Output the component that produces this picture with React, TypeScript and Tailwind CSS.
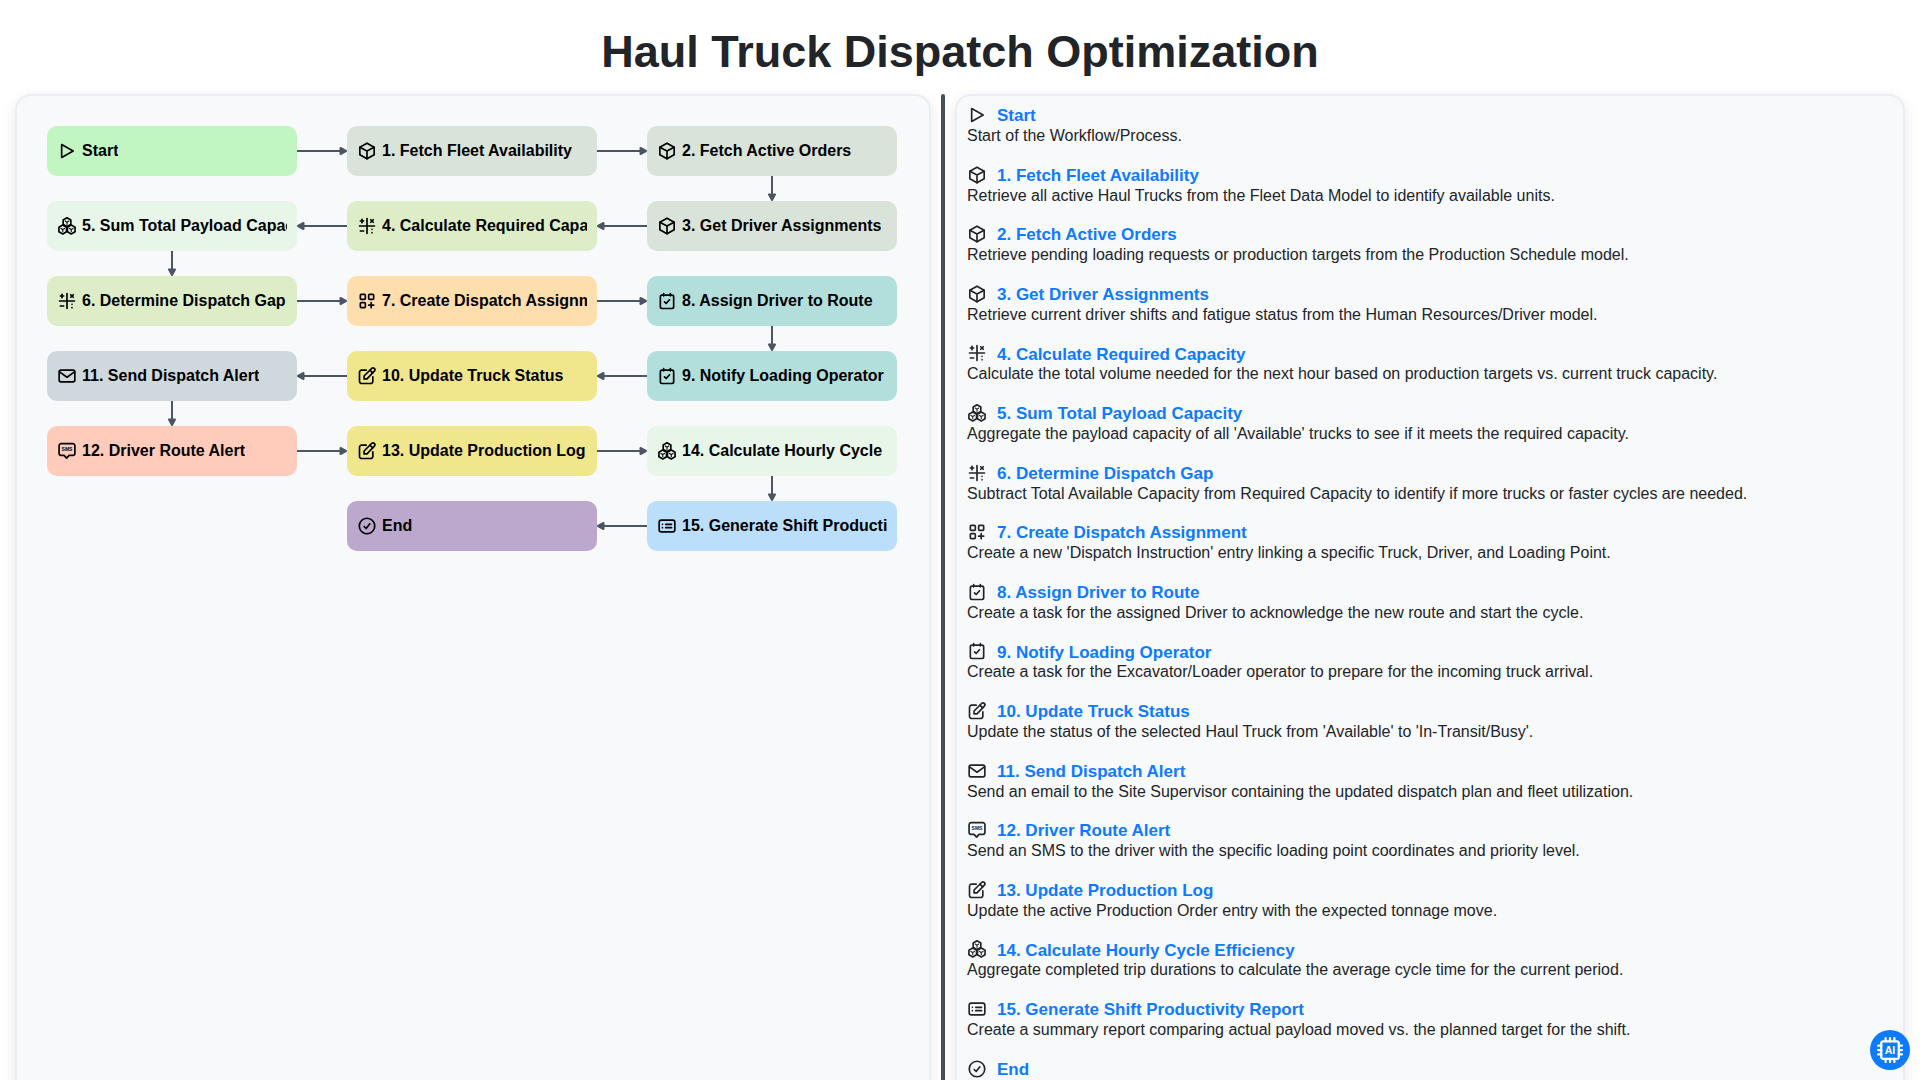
import React from "react";
import { TbMathSymbols, TbLayoutGridAdd } from "react-icons/tb";

type IconProps = { size?: number; className?: string };

const strokeProps = {
  fill: "none",
  stroke: "currentColor",
  strokeWidth: 2,
  strokeLinecap: "round" as const,
  strokeLinejoin: "round" as const,
};

function PlayIcon({ size = 20, className }: IconProps) {
  return (
    <svg width={size} height={size} viewBox="0 0 24 24" {...strokeProps} className={className}>
      <path d="M5.6 4.2v15.6L19.4 12z" />
    </svg>
  );
}

function BoxIcon({ size = 20, className }: IconProps) {
  return (
    <svg width={size} height={size} viewBox="0 0 24 24" {...strokeProps} className={className}>
      <path d="M12 2.6l8.6 4.9v9L12 21.4l-8.6-4.9v-9z" />
      <path d="M12 12l8.6-4.5M12 12v9.4M12 12L3.4 7.5" />
    </svg>
  );
}

function hexPoints(cx: number, cy: number, r: number) {
  const w = 0.866 * r;
  return `${cx},${cy - r} ${cx + w},${cy - r / 2} ${cx + w},${cy + r / 2} ${cx},${cy + r} ${cx - w},${cy + r / 2} ${cx - w},${cy - r / 2}`;
}

function HexIcon({ size = 20, className }: IconProps) {
  const centers = [
    [12, 7.4],
    [6.9, 16.2],
    [17.1, 16.2],
  ];
  return (
    <svg width={size} height={size} viewBox="0 0 24 24" {...strokeProps} strokeWidth={2} className={className}>
      {centers.map(([x, y]) => (
        <React.Fragment key={`${x}-${y}`}>
          <polygon points={hexPoints(x, y, 5.3)} />
          <path d={`M${x} ${y}v2.6M${x} ${y}l-2.2-1.3M${x} ${y}l2.2-1.3`} strokeWidth={1.3} />
        </React.Fragment>
      ))}
    </svg>
  );
}

function EditIcon({ size = 20, className }: IconProps) {
  return (
    <svg width={size} height={size} viewBox="0 0 24 24" {...strokeProps} className={className}>
      <path d="M11 5H5.5A2.5 2.5 0 0 0 3 7.5v11A2.5 2.5 0 0 0 5.5 21h11a2.5 2.5 0 0 0 2.5-2.5V13" />
      <path d="M8.5 15.5V12l9-9a2.2 2.2 0 0 1 3.3 3.2L12 15.5z" />
      <path d="M15.5 5l3.3 3.3" />
    </svg>
  );
}

function MailIcon({ size = 20, className }: IconProps) {
  return (
    <svg width={size} height={size} viewBox="0 0 24 24" {...strokeProps} className={className}>
      <rect x="2.6" y="5" width="18.8" height="14" rx="2.2" />
      <path d="M3 7l9 6.5L21 7" />
    </svg>
  );
}

function TaskIcon({ size = 20, className }: IconProps) {
  return (
    <svg width={size} height={size} viewBox="0 0 24 24" {...strokeProps} className={className}>
      <rect x="4" y="5" width="16" height="16" rx="2" />
      <path d="M8 3v3M16 3v3M9 13l2 2 4-4.5" />
    </svg>
  );
}

function SmsIcon({ size = 20, className }: IconProps) {
  return (
    <svg width={size} height={size} viewBox="0 0 24 24" fill="none" className={className}>
      <path d="M5 3.2h14a2.5 2.5 0 0 1 2.5 2.5v9a2.5 2.5 0 0 1-2.5 2.5h-4.5l-3 3.4-3-3.4H5A2.5 2.5 0 0 1 2.5 14.7v-9A2.5 2.5 0 0 1 5 3.2z" stroke="currentColor" strokeWidth="2" strokeLinejoin="round" />
      <text x="12" y="12.5" textAnchor="middle" fontSize="6" fontWeight="700" fontFamily="Liberation Sans" fill="currentColor">SMS</text>
    </svg>
  );
}

function ReportIcon({ size = 20, className }: IconProps) {
  return (
    <svg width={size} height={size} viewBox="0 0 24 24" {...strokeProps} className={className}>
      <rect x="2.6" y="5" width="18.8" height="14" rx="2.5" />
      <path d="M6.5 10h.01M6.5 14h.01M10.5 10h7M10.5 14h7" />
    </svg>
  );
}

function CheckIcon({ size = 20, className }: IconProps) {
  return (
    <svg width={size} height={size} viewBox="0 0 24 24" {...strokeProps} className={className}>
      <circle cx="12" cy="12" r="9.3" />
      <path d="M8.6 12.6l2.4 2.4 4.4-5.6" />
    </svg>
  );
}

type Step = { title: string; desc: string; icon: React.ComponentType<IconProps>; bg: string };

const steps: Record<string, Step> = {
  start: { title: "Start", desc: "Start of the Workflow/Process.", icon: PlayIcon, bg: "bg-[#c1f5c1]" },
  s1: { title: "1. Fetch Fleet Availability", desc: "Retrieve all active Haul Trucks from the Fleet Data Model to identify available units.", icon: BoxIcon, bg: "bg-[#d9e3da]" },
  s2: { title: "2. Fetch Active Orders", desc: "Retrieve pending loading requests or production targets from the Production Schedule model.", icon: BoxIcon, bg: "bg-[#d9e3da]" },
  s3: { title: "3. Get Driver Assignments", desc: "Retrieve current driver shifts and fatigue status from the Human Resources/Driver model.", icon: BoxIcon, bg: "bg-[#d9e3da]" },
  s4: { title: "4. Calculate Required Capacity", desc: "Calculate the total volume needed for the next hour based on production targets vs. current truck capacity.", icon: TbMathSymbols, bg: "bg-[#dcedc8]" },
  s5: { title: "5. Sum Total Payload Capacity", desc: "Aggregate the payload capacity of all 'Available' trucks to see if it meets the required capacity.", icon: HexIcon, bg: "bg-[#e8f5e9]" },
  s6: { title: "6. Determine Dispatch Gap", desc: "Subtract Total Available Capacity from Required Capacity to identify if more trucks or faster cycles are needed.", icon: TbMathSymbols, bg: "bg-[#dcedc8]" },
  s7: { title: "7. Create Dispatch Assignment", desc: "Create a new 'Dispatch Instruction' entry linking a specific Truck, Driver, and Loading Point.", icon: TbLayoutGridAdd, bg: "bg-[#ffdead]" },
  s8: { title: "8. Assign Driver to Route", desc: "Create a task for the assigned Driver to acknowledge the new route and start the cycle.", icon: TaskIcon, bg: "bg-[#b2dfdb]" },
  s9: { title: "9. Notify Loading Operator", desc: "Create a task for the Excavator/Loader operator to prepare for the incoming truck arrival.", icon: TaskIcon, bg: "bg-[#b2dfdb]" },
  s10: { title: "10. Update Truck Status", desc: "Update the status of the selected Haul Truck from 'Available' to 'In-Transit/Busy'.", icon: EditIcon, bg: "bg-[#f0e68c]" },
  s11: { title: "11. Send Dispatch Alert", desc: "Send an email to the Site Supervisor containing the updated dispatch plan and fleet utilization.", icon: MailIcon, bg: "bg-[#cfd8dc]" },
  s12: { title: "12. Driver Route Alert", desc: "Send an SMS to the driver with the specific loading point coordinates and priority level.", icon: SmsIcon, bg: "bg-[#ffccbc]" },
  s13: { title: "13. Update Production Log", desc: "Update the active Production Order entry with the expected tonnage move.", icon: EditIcon, bg: "bg-[#f0e68c]" },
  s14: { title: "14. Calculate Hourly Cycle Efficiency", desc: "Aggregate completed trip durations to calculate the average cycle time for the current period.", icon: HexIcon, bg: "bg-[#e8f5e9]" },
  s15: { title: "15. Generate Shift Productivity Report", desc: "Create a summary report comparing actual payload moved vs. the planned target for the shift.", icon: ReportIcon, bg: "bg-[#bbdefb]" },
  end: { title: "End", desc: "End of the Workflow/Process.", icon: CheckIcon, bg: "bg-[#bca7cd]" },
};

const order = ["start", "s1", "s2", "s3", "s4", "s5", "s6", "s7", "s8", "s9", "s10", "s11", "s12", "s13", "s14", "s15", "end"];

function Node({ id }: { id: string }) {
  const s = steps[id];
  const Icon = s.icon;
  return (
    <div className={`flex h-[50px] w-[250px] items-center rounded-[10px] px-[10px] font-bold text-black ${s.bg}`}>
      <Icon size={20} className="mr-[5px] shrink-0" />
      <span className="overflow-hidden whitespace-nowrap">{s.title}</span>
    </div>
  );
}

function HArrow({ left = false }: { left?: boolean }) {
  return (
    <svg width="50" height="50" viewBox="0 0 50 50" className="block">
      {left ? (
        <>
          <line x1="6" y1="25" x2="50" y2="25" stroke="#4b5563" strokeWidth="2" />
          <polygon points="1,25 6.5,22 6.5,28" fill="#4b5563" stroke="#4b5563" strokeWidth="2" strokeLinejoin="round" />
        </>
      ) : (
        <>
          <line x1="0" y1="25" x2="44" y2="25" stroke="#4b5563" strokeWidth="2" />
          <polygon points="49,25 43.5,22 43.5,28" fill="#4b5563" stroke="#4b5563" strokeWidth="2" strokeLinejoin="round" />
        </>
      )}
    </svg>
  );
}

function VArrow() {
  return (
    <svg width="250" height="25" viewBox="0 0 250 25" className="block">
      <line x1="125" y1="0" x2="125" y2="19" stroke="#4b5563" strokeWidth="2" />
      <polygon points="125,24 122,18.5 128,18.5" fill="#4b5563" stroke="#4b5563" strokeWidth="2" strokeLinejoin="round" />
    </svg>
  );
}

const E = () => <div />;

function Flow() {
  return (
    <div className="grid grid-cols-[250px_50px_250px_50px_250px] grid-rows-[50px_25px_50px_25px_50px_25px_50px_25px_50px_25px_50px]">
      <Node id="start" /><HArrow /><Node id="s1" /><HArrow /><Node id="s2" />
      <E /><E /><E /><E /><VArrow />
      <Node id="s5" /><HArrow left /><Node id="s4" /><HArrow left /><Node id="s3" />
      <VArrow /><E /><E /><E /><E />
      <Node id="s6" /><HArrow /><Node id="s7" /><HArrow /><Node id="s8" />
      <E /><E /><E /><E /><VArrow />
      <Node id="s11" /><HArrow left /><Node id="s10" /><HArrow left /><Node id="s9" />
      <VArrow /><E /><E /><E /><E />
      <Node id="s12" /><HArrow /><Node id="s13" /><HArrow /><Node id="s14" />
      <E /><E /><E /><E /><VArrow />
      <E /><E /><Node id="end" /><HArrow left /><Node id="s15" />
    </div>
  );
}

export default function App() {
  return (
    <div className="h-screen overflow-hidden bg-white font-['Liberation_Sans',Arial,sans-serif] text-[16px] text-[#212529]">
      <h1 className="m-0 pt-[27px] pb-[17px] text-center text-[45px] leading-[50px] font-bold text-[#212529]">Haul Truck Dispatch Optimization</h1>
      <div className="flex h-[986px] pl-[15px] pr-[15px]">
        <div className="h-[1200px] w-[916px] shrink-0 rounded-[16px] border-2 border-[#ecedf3] bg-[#f8f9fb] pt-[30px] pl-[30px] shadow-[0_4px_14px_rgba(30,30,70,0.1)]">
          <Flow />
        </div>
        <div className="mx-[10px] h-[1200px] w-[4px] shrink-0 rounded-t-[2px] bg-[#4a4f60]" />
        <div className="h-[1200px] flex-1 rounded-[16px] border-2 border-[#ecedf3] bg-[#f8f9fb] pt-[9px] pl-[10px] shadow-[0_4px_14px_rgba(30,30,70,0.1)]">
          {order.map((id) => {
            const s = steps[id];
            const Icon = s.icon;
            return (
              <div key={id} className="mb-[18.05px]">
                <div className="flex h-[22px] items-center">
                  <span className="mb-[2px] flex w-[20px] shrink-0 justify-center text-[#212529]"><Icon size={20} /></span>
                  <span className="ml-[10px] text-[17px] font-bold text-[#0d7bff]">{s.title}</span>
                </div>
                <div className="h-[19.55px] leading-[18.4px]">{s.desc}</div>
              </div>
            );
          })}
        </div>
      </div>
      <div className="fixed right-[10px] bottom-[10px] flex h-[40px] w-[40px] items-center justify-center rounded-full bg-[#0d7bff] text-white">
        <svg width="30" height="30" viewBox="0 0 24 24" fill="none" stroke="currentColor" strokeWidth="1.8" strokeLinecap="round" strokeLinejoin="round">
          <rect x="5" y="5" width="14" height="14" rx="1.5" />
          <path d="M8.5 2.5v2.5M12 2.5v2.5M15.5 2.5v2.5M8.5 19v2.5M12 19v2.5M15.5 19v2.5M2.5 8.5H5M2.5 12H5M2.5 15.5H5M19 8.5h2.5M19 12h2.5M19 15.5h2.5" />
          <text x="12" y="15.2" textAnchor="middle" fontSize="8.5" fontWeight="700" fontFamily="Liberation Sans" fill="currentColor" stroke="none">AI</text>
        </svg>
      </div>
    </div>
  );
}
